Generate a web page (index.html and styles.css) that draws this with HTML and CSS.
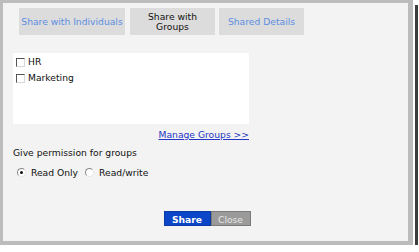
FILE: index.html
```html
<!DOCTYPE html>
<html>
<head>
<meta charset="utf-8">
<link rel="stylesheet" href="styles.css">
</head>
<body>
<div class="dialog">
  <div class="tabs">
    <div class="tab tab-ind">Share with Individuals</div>
    <div class="tab tab-groups active">Share with<br>Groups</div>
    <div class="tab tab-details">Shared Details</div>
  </div>
  <div class="group-box">
    <label class="item"><span class="check"></span>HR</label>
    <label class="item"><span class="check"></span>Marketing</label>
  </div>
  <div class="manage-row"><a class="manage" href="#">Manage Groups &gt;&gt;</a></div>
  <div class="perm-label">Give permission for groups</div>
  <div class="radios">
    <span class="radio checked"></span><span class="radio-text">Read Only</span>
    <span class="radio"></span><span class="radio-text">Read/write</span>
  </div>
  <div class="buttons">
    <span class="btn btn-share">Share</span><span class="btn btn-close">Close</span>
  </div>
</div>
</body>
</html>
```
FILE: styles.css
```css
html, body {
  margin: 0;
  padding: 0;
  background: #ffffff;
}
body {
  font-family: "DejaVu Sans", Verdana, sans-serif;
  font-size: 9.2px;
  color: #111;
}
.dialog {
  width: 405px;
  height: 238px;
  background: #f3f3f3;
  border-style: solid;
  border-color: #bcbcbc;
  border-width: 3px 5px 4px 3px;
  box-shadow: 2px 2px 0 #ffffff, 5px 5px 0 #3c3c3c;
  display: flex;
  flex-direction: column;
}
.tabs {
  display: flex;
  padding: 5px 0 0 16px;
}
.tab {
  height: 27px;
  background: #dcdcdc;
  display: flex;
  align-items: center;
  justify-content: center;
  text-align: center;
  line-height: 10px;
  color: #5b8ee2;
}
.tab-ind { width: 106px; }
.tab-groups { width: 85px; margin-left: 5px; color: #111; }
.tab-details { width: 85px; margin-left: 4px; }
.group-box {
  margin: 18px 0 0 10px;
  width: 233px;
  height: 69px;
  background: #ffffff;
  padding: 1px 0 1px 3px;
}
.item {
  display: flex;
  align-items: center;
  height: 16px;
  line-height: 16px;
}
.check {
  width: 7px;
  height: 7px;
  background: #fff;
  border-style: solid;
  border-width: 1px;
  border-color: #555 #d8d8d8 #d8d8d8 #555;
  margin-right: 3px;
}
.manage-row {
  width: 246px;
  display: flex;
  justify-content: flex-end;
  margin-top: 5px;
  line-height: 12px;
}
.manage {
  color: #2536c4;
  text-decoration: underline;
}
.perm-label {
  margin: 6px 0 0 10px;
  line-height: 12px;
}
.radios {
  display: flex;
  align-items: center;
  margin: 7px 0 0 14px;
  height: 12px;
}
.radio {
  width: 7px;
  height: 7px;
  border-radius: 50%;
  background: #fff;
  border: 1px solid;
  border-color: #888 #e6e6e6 #e6e6e6 #888;
  margin-right: 5px;
  position: relative;
}
.radio.checked::after {
  content: "";
  position: absolute;
  left: 2px;
  top: 2px;
  width: 3px;
  height: 3px;
  border-radius: 50%;
  background: #111;
}
.radio-text { margin-right: 7px; }
.buttons {
  display: flex;
  justify-content: center;
  margin-top: 33px;
  padding-left: 3px;
}
.btn {
  height: 15px;
  line-height: 15px;
  text-align: center;
  box-sizing: border-box;
}
.btn-share {
  width: 47px;
  background: #0b45c8;
  color: #fff;
  font-weight: bold;
  border: 1px solid #0a3aa6;
}
.btn-close {
  width: 40px;
  background: #9a9a9a;
  color: #e6e6e6;
  border: 1px solid #7a7a7a;
}
```
